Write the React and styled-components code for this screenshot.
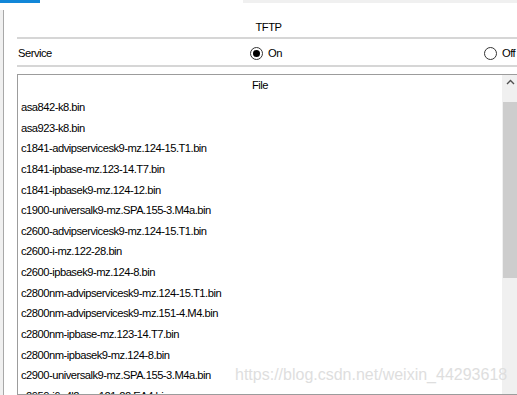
import React from "react";
import styled, { createGlobalStyle } from "styled-components";

const Global = createGlobalStyle`
  html, body { margin: 0; padding: 0; background: #ffffff; }
  body {
    font-family: "Liberation Sans", Arial, sans-serif;
    font-size: 11px;
    color: #000;
    overflow: hidden;
  }
`;

const Screen = styled.div`
  width: 517px;
  height: 395px;
  overflow: hidden;
  position: relative;
  background: #fff;
`;

const TopStrip = styled.div`
  display: flex;
  height: 3px;
`;

const StripPart = styled.div`
  width: ${(p) => p.$w || "auto"};
  flex: ${(p) => (p.$grow ? 1 : "none")};
  background: ${(p) => p.$bg};
`;

const Window = styled.div`
  display: flex;
  margin-top: 7px;
  height: 385px;
`;

const Frame = styled.div`
  width: 3px;
  flex: none;
  background: #f0f0f0;
  border-right: 1px solid #a8a8a8;
`;

const Content = styled.div`
  flex: none;
  width: 503px;
  margin-left: 13px;
  display: flex;
  flex-direction: column;
  font-size: 11.2px;
  letter-spacing: -0.5px;
`;

const Title = styled.div`
  height: 27px;
  display: flex;
  align-items: center;
  justify-content: center;
  padding-top: 7px;
  box-sizing: border-box;
`;

const Separator = styled.div`
  height: 2px;
  background: #d6d6d6;
`;

const ServiceRow = styled.div`
  display: grid;
  grid-template-columns: 233px 234px 1fr;
  align-items: center;
  height: 26px;
  padding-top: 2px;
  box-sizing: border-box;
`;

const Label = styled.span`
  padding-left: 1px;
`;

const RadioOption = styled.label`
  display: flex;
  align-items: center;
  gap: 5px;
  white-space: nowrap;
`;

const RadioCircle = styled.span`
  width: 13px;
  height: 13px;
  box-sizing: border-box;
  border-radius: 50%;
  border: 1px solid #333;
  background: #fff;
  display: flex;
  align-items: center;
  justify-content: center;
  &::after {
    content: "";
    width: 7px;
    height: 7px;
    border-radius: 50%;
    background: ${(p) => (p.$checked ? "#000" : "transparent")};
  }
`;

const TableBox = styled.div`
  margin-top: 7px;
  border: 1px solid #9c9c9c;
  flex: 1;
  display: flex;
  overflow: hidden;
`;

const List = styled.div`
  flex: 1;
  display: grid;
  grid-auto-rows: 20.65px;
  align-content: start;
`;

const HeaderCell = styled.div`
  display: flex;
  align-items: center;
  justify-content: center;
`;

const Row = styled.div`
  display: flex;
  align-items: center;
  padding-left: 3px;
  padding-top: 2px;
  box-sizing: border-box;
  white-space: nowrap;
`;

const ScrollBar = styled.div`
  width: 17px;
  flex: none;
  background: #f0f0f0;
  display: flex;
  flex-direction: column;
  align-items: center;
`;

const ArrowButton = styled.div`
  height: 27px;
  width: 100%;
  display: flex;
  justify-content: center;
  padding-top: 4px;
  box-sizing: border-box;
`;

const Thumb = styled.div`
  width: 15px;
  height: 176px;
  background: #cdcdcd;
`;

const Watermark = styled.div`
  position: absolute;
  left: 235px;
  top: 366px;
  font-family: "Liberation Sans", Arial, sans-serif;
  font-size: 16px;
  color: #dedede;
  white-space: nowrap;
  pointer-events: none;
`;

const files = [
  "asa842-k8.bin",
  "asa923-k8.bin",
  "c1841-advipservicesk9-mz.124-15.T1.bin",
  "c1841-ipbase-mz.123-14.T7.bin",
  "c1841-ipbasek9-mz.124-12.bin",
  "c1900-universalk9-mz.SPA.155-3.M4a.bin",
  "c2600-advipservicesk9-mz.124-15.T1.bin",
  "c2600-i-mz.122-28.bin",
  "c2600-ipbasek9-mz.124-8.bin",
  "c2800nm-advipservicesk9-mz.124-15.T1.bin",
  "c2800nm-advipservicesk9-mz.151-4.M4.bin",
  "c2800nm-ipbase-mz.123-14.T7.bin",
  "c2800nm-ipbasek9-mz.124-8.bin",
  "c2900-universalk9-mz.SPA.155-3.M4a.bin",
  "c2950-i6q4l2-mz.121-22.EA4.bin",
  "c2950-i6q4l2-mz.121-22.EA9.bin",
  "c2960-lanbasek9-mz.122-25.FX.bin",
];

export default function App() {
  return (
    <Screen>
      <Global />
      <TopStrip>
        <StripPart $w="40px" $bg="#1187d8" />
        <StripPart $w="203px" $bg="#ffffff" />
        <StripPart $grow $bg="#f0f0f0" />
      </TopStrip>
      <Window>
        <Frame />
        <Content>
          <Title>TFTP</Title>
          <Separator />
          <ServiceRow>
            <Label>Service</Label>
            <RadioOption>
              <RadioCircle $checked />
              On
            </RadioOption>
            <RadioOption>
              <RadioCircle />
              Off
            </RadioOption>
          </ServiceRow>
          <Separator />
          <TableBox>
            <List>
              <HeaderCell>File</HeaderCell>
              {files.map((f) => (
                <Row key={f}>{f}</Row>
              ))}
            </List>
            <ScrollBar>
              <ArrowButton>
                <svg width="9" height="6" viewBox="0 0 9 6">
                  <path d="M1 5 L4.5 1.5 L8 5" fill="none" stroke="#505050" strokeWidth="1.4" />
                </svg>
              </ArrowButton>
              <Thumb />
            </ScrollBar>
          </TableBox>
        </Content>
      </Window>
      <Watermark>https://blog.csdn.net/weixin_44293618</Watermark>
    </Screen>
  );
}
